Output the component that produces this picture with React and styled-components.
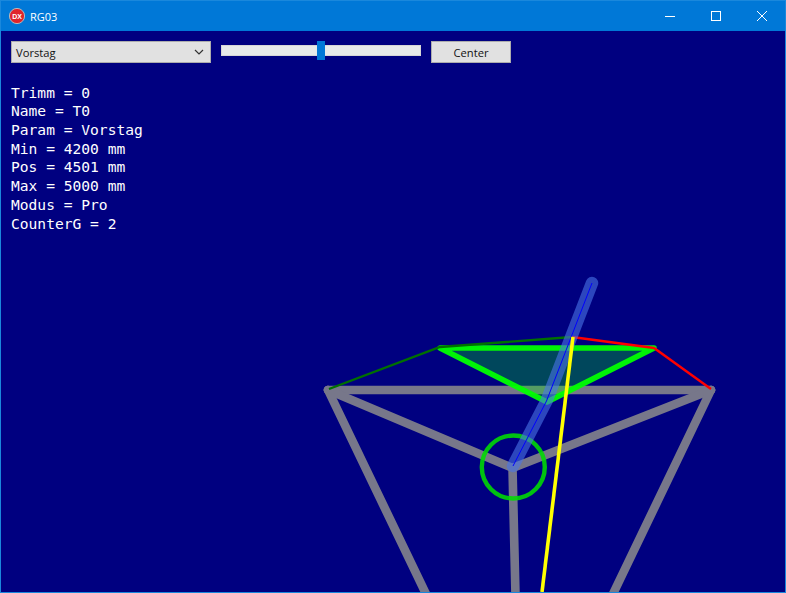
import React from 'react';
import styled, { createGlobalStyle } from 'styled-components';

const GlobalStyle = createGlobalStyle`
  html, body {
    margin: 0;
    padding: 0;
    width: 786px;
    height: 593px;
    overflow: hidden;
    background: #000080;
  }
`;

const Window = styled.div`
  width: 786px;
  height: 593px;
  box-sizing: border-box;
  border: 1px solid #1a88dc;
  display: flex;
  flex-direction: column;
  font-family: 'Open Sans', 'Noto Sans', sans-serif;
`;

const TitleBar = styled.div`
  height: 30px;
  flex: none;
  background: #0078d7;
  display: flex;
  align-items: center;
  color: #fff;
`;

const AppIcon = styled.svg`
  width: 18px;
  height: 18px;
  margin: 0 4px 0 7px;
  flex: none;
`;

const Title = styled.div`
  flex: 1;
  font-size: 11px;
  padding-top: 1px;
`;

const CaptionButton = styled.div`
  width: 46px;
  height: 30px;
  display: flex;
  align-items: center;
  justify-content: center;
`;

const Stage = styled.div`
  position: relative;
  flex: 1;
  background: #000080;
  overflow: hidden;
`;

const Scene = styled.svg`
  position: absolute;
  left: 0;
  top: 0;
`;

const Toolbar = styled.div`
  position: relative;
  display: flex;
  align-items: flex-start;
  gap: 10px;
  padding: 10px 10px 0;
`;

const Control = styled.div`
  box-sizing: border-box;
  height: 22px;
  background: #e1e1e1;
  border: 1px solid #adadad;
  color: #111;
  font-size: 11.2px;
  display: flex;
  align-items: center;
`;

const Select = styled(Control)`
  width: 200px;
  padding: 0 6px 0 4px;
  justify-content: space-between;
`;

const Button = styled(Control)`
  width: 80px;
  justify-content: center;
`;

const Slider = styled.div`
  position: relative;
  width: 200px;
  height: 11px;
  margin-top: 4px;
  box-sizing: border-box;
  background: #e7eaea;
  border: 1px solid #d6d6d6;
`;

const Thumb = styled.div`
  position: absolute;
  top: -5px;
  width: 8px;
  height: 19px;
  background: #0078d7;
`;

const Readout = styled.div`
  position: relative;
  margin: 20.6px 0 0 10px;
  font-family: 'DejaVu Sans Mono', 'Liberation Mono', monospace;
  font-size: 14.6px;
  line-height: 18.72px;
  color: #fff;
`;

const readout = [
  'Trimm = 0',
  'Name = T0',
  'Param = Vorstag',
  'Min = 4200 mm',
  'Pos = 4501 mm',
  'Max = 5000 mm',
  'Modus = Pro',
  'CounterG = 2',
];

const grayLines = [
  [327, 359, 710, 359],
  [327, 359, 511.5, 437],
  [710, 359, 511.5, 437],
  [511.5, 437, 514.5, 565],
  [327, 359, 426, 565],
  [710, 359, 611, 565],
];

const MAST = '591,252 545.5,370 512,435';
const TRIANGLE = '439,317 653,317 546,371';

export default function App() {
  return (
    <Window>
      <GlobalStyle />
      <TitleBar>
        <AppIcon viewBox="0 0 18 18">
          <circle cx="9" cy="9" r="7.6" fill="#e0242c" stroke="#b9b9b9" strokeWidth="1" />
          <text x="9" y="11.5" fontSize="7" fontWeight="700" fill="#fff" textAnchor="middle" fontFamily="Liberation Sans, sans-serif">DX</text>
        </AppIcon>
        <Title>RG03</Title>
        <CaptionButton>
          <svg width="10" height="10" viewBox="0 0 10 10"><path d="M0 5.5H10" stroke="#fff" strokeWidth="1" /></svg>
        </CaptionButton>
        <CaptionButton>
          <svg width="10" height="10" viewBox="0 0 10 10"><rect x="0.5" y="0.5" width="9" height="9" fill="none" stroke="#fff" strokeWidth="1" /></svg>
        </CaptionButton>
        <CaptionButton>
          <svg width="10" height="10" viewBox="0 0 10 10"><path d="M0 0L10 10M10 0L0 10" stroke="#fff" strokeWidth="1" /></svg>
        </CaptionButton>
      </TitleBar>
      <Stage>
        <Scene width="784" height="561" viewBox="0 0 784 561">
          {/* scene coordinates are window coordinates shifted by the title bar */}
          <g stroke="#77778a" strokeWidth="8.6" strokeLinecap="round" fill="none">
            {grayLines.map(([x1, y1, x2, y2], idx) => (
              <line key={idx} x1={x1} y1={y1} x2={x2} y2={y2} />
            ))}
          </g>
          <polygon points={TRIANGLE} fill="#00ff00" fillOpacity="0.28" />
          <polygon points={TRIANGLE} fill="none" stroke="#00ff00" strokeWidth="5.6" strokeOpacity="0.95" strokeLinejoin="round" />
          <polyline points="328,358 439,316 571,306" fill="none" stroke="#007000" strokeWidth="2.4" />
          <polyline points="571,306 653,317 710,358" fill="none" stroke="#ff0000" strokeWidth="2.4" />
          <circle cx="512.3" cy="436" r="31.5" fill="none" stroke="#00dd00" strokeOpacity="0.88" strokeWidth="4.4" />
          <polyline points={MAST} fill="none" stroke="#4a74e8" strokeOpacity="0.6" strokeWidth="12.5" strokeLinecap="round" strokeLinejoin="round" />
          <polyline points={MAST} fill="none" stroke="#0000ff" strokeWidth="1" />
          <line x1="572" y1="306" x2="541" y2="561" stroke="#ffff00" strokeWidth="3.6" />
        </Scene>
        <Toolbar>
          <Select>
            Vorstag
            <svg width="10" height="6" viewBox="0 0 10 6"><path d="M1 1L5 5L9 1" fill="none" stroke="#333" strokeWidth="1.2" /></svg>
          </Select>
          <Slider>
            <Thumb style={{ left: 95 }} />
          </Slider>
          <Button>Center</Button>
        </Toolbar>
        <Readout>
          {readout.map((line) => (
            <div key={line}>{line}</div>
          ))}
        </Readout>
      </Stage>
    </Window>
  );
}
